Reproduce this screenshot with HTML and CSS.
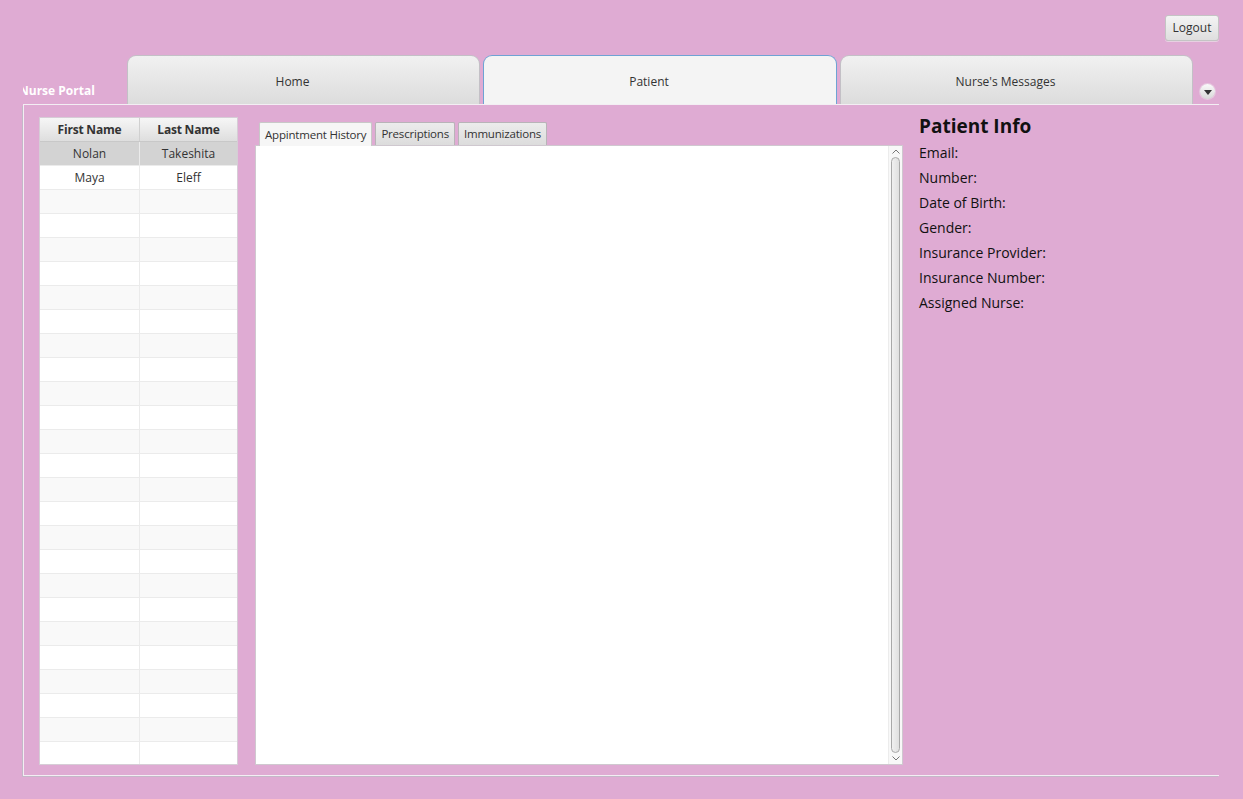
FILE: index.html
```html
<!DOCTYPE html>
<html>
<head>
<meta charset="utf-8">
<link rel="stylesheet" href="styles.css">
</head>
<body>
<div class="app">
  <div class="topbar">
    <button class="logout">Logout</button>
  </div>
  <div class="tabrow">
    <div class="portal"><span>Nurse Portal</span></div>
    <div class="tab">Home</div>
    <div class="tab selected">Patient</div>
    <div class="tab">Nurse's Messages</div>
    <div class="menu"><span class="circle"><svg width="8" height="5" viewBox="0 0 8 5"><path d="M0 0 L8 0 L4 5 Z" fill="#333"/></svg></span></div>
  </div>
  <div class="frame">
    <div class="table">
      <div class="thead">
        <div class="th">First Name</div>
        <div class="th">Last Name</div>
      </div>
      <div class="tbody">
        <div class="tr sel"><div class="td">Nolan</div><div class="td">Takeshita</div></div>
        <div class="tr"><div class="td">Maya</div><div class="td">Eleff</div></div>
        <div class="tr"><div class="td"></div><div class="td"></div></div>
        <div class="tr"><div class="td"></div><div class="td"></div></div>
        <div class="tr"><div class="td"></div><div class="td"></div></div>
        <div class="tr"><div class="td"></div><div class="td"></div></div>
        <div class="tr"><div class="td"></div><div class="td"></div></div>
        <div class="tr"><div class="td"></div><div class="td"></div></div>
        <div class="tr"><div class="td"></div><div class="td"></div></div>
        <div class="tr"><div class="td"></div><div class="td"></div></div>
        <div class="tr"><div class="td"></div><div class="td"></div></div>
        <div class="tr"><div class="td"></div><div class="td"></div></div>
        <div class="tr"><div class="td"></div><div class="td"></div></div>
        <div class="tr"><div class="td"></div><div class="td"></div></div>
        <div class="tr"><div class="td"></div><div class="td"></div></div>
        <div class="tr"><div class="td"></div><div class="td"></div></div>
        <div class="tr"><div class="td"></div><div class="td"></div></div>
        <div class="tr"><div class="td"></div><div class="td"></div></div>
        <div class="tr"><div class="td"></div><div class="td"></div></div>
        <div class="tr"><div class="td"></div><div class="td"></div></div>
        <div class="tr"><div class="td"></div><div class="td"></div></div>
        <div class="tr"><div class="td"></div><div class="td"></div></div>
        <div class="tr"><div class="td"></div><div class="td"></div></div>
        <div class="tr"><div class="td"></div><div class="td"></div></div>
        <div class="tr"><div class="td"></div><div class="td"></div></div>
        <div class="tr"><div class="td"></div><div class="td"></div></div>
      </div>
    </div>
    <div class="tabpane">
      <div class="itabs">
        <div class="itab selected">Appintment History</div>
        <div class="itab">Prescriptions</div>
        <div class="itab">Immunizations</div>
      </div>
      <div class="icontent">
        <div class="scrollbar">
          <div class="arrow up"><svg width="8" height="5" viewBox="0 0 8 5"><path d="M0.5 4.5 L4 1 L7.5 4.5" fill="none" stroke="#777" stroke-width="1"/></svg></div>
          <div class="thumb"></div>
          <div class="arrow down"><svg width="8" height="5" viewBox="0 0 8 5"><path d="M0.5 0.5 L4 4 L7.5 0.5" fill="none" stroke="#777" stroke-width="1"/></svg></div>
        </div>
      </div>
    </div>
    <div class="info">
      <h1>Patient Info</h1>
      <div class="field">Email:</div>
      <div class="field">Number:</div>
      <div class="field">Date of Birth:</div>
      <div class="field">Gender:</div>
      <div class="field">Insurance Provider:</div>
      <div class="field">Insurance Number:</div>
      <div class="field">Assigned Nurse:</div>
    </div>
  </div>
</div>
</body>
</html>
```

FILE: styles.css
```css
html, body {
  margin: 0;
  padding: 0;
  background: #dfabd3;
  width: 1243px;
  height: 799px;
  overflow: hidden;
  font-family: "Open Sans", "Noto Sans", sans-serif;
  color: #333;
}
.app {
  padding: 0 24px 0 23px;
}
.topbar {
  height: 55px;
  display: flex;
  justify-content: flex-end;
  align-items: flex-start;
}
.logout {
  margin-top: 15px;
  width: 54px;
  height: 26px;
  padding: 0 0 2px 0;
  font-family: inherit;
  font-size: 12px;
  color: #333;
  border: 1px solid #c4c4c4;
  border-radius: 3px;
  background: linear-gradient(#f4f4f4, #dedede);
  box-shadow: 0 1px 0 #e8d0e2;
}
.tabrow {
  height: 49px;
  display: flex;
  align-items: flex-end;
  gap: 3px;
  border-bottom: 1px solid #f3eef3;
  box-sizing: content-box;
}
.portal {
  width: 101px;
  height: 20px;
  overflow: hidden;
  align-self: flex-end;
  margin-bottom: 3px;
  color: #fff;
  font-weight: bold;
  font-size: 12px;
  white-space: nowrap;
}
.portal span {
  display: block;
  margin-left: -4px;
  line-height: 20px;
}
.tab {
  width: 353px;
  height: 49px;
  box-sizing: border-box;
  border: 1px solid #c3c0c6;
  border-bottom: none;
  border-radius: 9px 9px 0 0;
  background: linear-gradient(#f1f1f1, #dcdcdc);
  font-size: 12px;
  color: #333;
  display: flex;
  align-items: center;
  justify-content: center;
  padding: 3px 22px 0 0;
}
.tab.selected {
  background: #f4f4f4;
  border: 1px solid #6ea3d4;
  border-bottom: none;
  width: 354px;
}
.menu {
  flex: 1;
  height: 49px;
  display: flex;
  align-items: flex-end;
  justify-content: flex-end;
  padding-bottom: 5px;
  box-sizing: border-box;
}
.circle {
  width: 15px;
  height: 15px;
  border-radius: 50%;
  background: linear-gradient(#fafafa, #d8d8d8);
  box-shadow: 0 0 0 1px #e6c6de;
  display: flex;
  align-items: center;
  justify-content: center;
  margin-right: 4px;
}
.circle svg {
  margin-top: 1px;
}
.frame {
  height: 671px;
  border-left: 1px solid #f3eef3;
  border-bottom: 1px solid #f3eef3;
  box-shadow: -1px 1px 0 #c4b8c8;
  display: flex;
  align-items: flex-start;
  padding: 12px 0 0 15px;
  box-sizing: border-box;
}
.table {
  width: 199px;
  height: 648px;
  display: flex;
  flex-direction: column;
  background: #fff;
  border: 1px solid #d6cdd6;
  box-sizing: border-box;
  overflow: hidden;
  font-size: 12px;
}
.thead {
  display: flex;
  height: 24px;
  flex: none;
  background: linear-gradient(#f6f6f6, #dedede);
  border-bottom: 1px solid #c8c8c8;
  box-sizing: border-box;
}
.th {
  width: 99px;
  display: flex;
  align-items: center;
  justify-content: center;
  font-weight: bold;
  color: #333;
  border-right: 1px solid #d0d0d0;
  letter-spacing: -0.2px;
}
.th:last-child {
  border-right: none;
  flex: 1;
}
.tr {
  display: flex;
  height: 24px;
  border-bottom: 1px solid #ebebeb;
  box-sizing: border-box;
  background: #fff;
}
.tr:nth-child(even) {
  background: #fff;
}
.tr:nth-child(odd) {
  background: #f9f9f9;
}
.tr.sel {
  background: #d3d3d3;
}
.td {
  width: 99px;
  border-right: 1px solid #ebebeb;
  display: flex;
  align-items: center;
  justify-content: center;
  color: #333;
  padding-bottom: 1px;
}
.td:last-child {
  border-right: none;
  flex: 1;
}
.tabpane {
  margin-left: 17px;
  margin-top: 4px;
  width: 648px;
  height: 644px;
  display: flex;
  flex-direction: column;
}
.itabs {
  height: 24px;
  display: flex;
  align-items: flex-end;
  gap: 3px;
  padding-left: 4px;
  flex: none;
}
.itab {
  height: 23px;
  box-sizing: border-box;
  padding: 0 5px 1px 5px;
  border: 1px solid #b8b4b8;
  border-bottom: none;
  border-radius: 2px 2px 0 0;
  background: linear-gradient(#ececec, #dcdcdc);
  font-size: 11.5px;
  letter-spacing: -0.2px;
  color: #333;
  display: flex;
  align-items: center;
}
.itab.selected {
  background: #f6f6f6;
  height: 24px;
  margin-bottom: -1px;
  position: relative;
  z-index: 1;
  border-color: #c8c8c8;
}
.icontent {
  flex: 1;
  background: #fff;
  border: 1px solid #cfc8cf;
  display: flex;
  justify-content: flex-end;
}
.scrollbar {
  width: 13px;
  display: flex;
  flex-direction: column;
  align-items: center;
  background: #f8f8f8;
  border-left: 1px solid #ececec;
}
.arrow {
  height: 11px;
  display: flex;
  align-items: center;
  justify-content: center;
  flex: none;
}
.thumb {
  flex: 1;
  width: 9px;
  border: 1px solid #a9a9a9;
  border-radius: 5px;
  background: linear-gradient(90deg, #f0f0f0, #e0e0e0);
  box-sizing: border-box;
}
.info {
  margin-left: 16px;
  margin-top: -3px;
  color: #111;
}
.info h1 {
  margin: 0;
  font-size: 19px;
  line-height: 24px;
  font-weight: bold;
  height: 26px;
}
.field {
  font-size: 14px;
  height: 25px;
  line-height: 25px;
}
```
